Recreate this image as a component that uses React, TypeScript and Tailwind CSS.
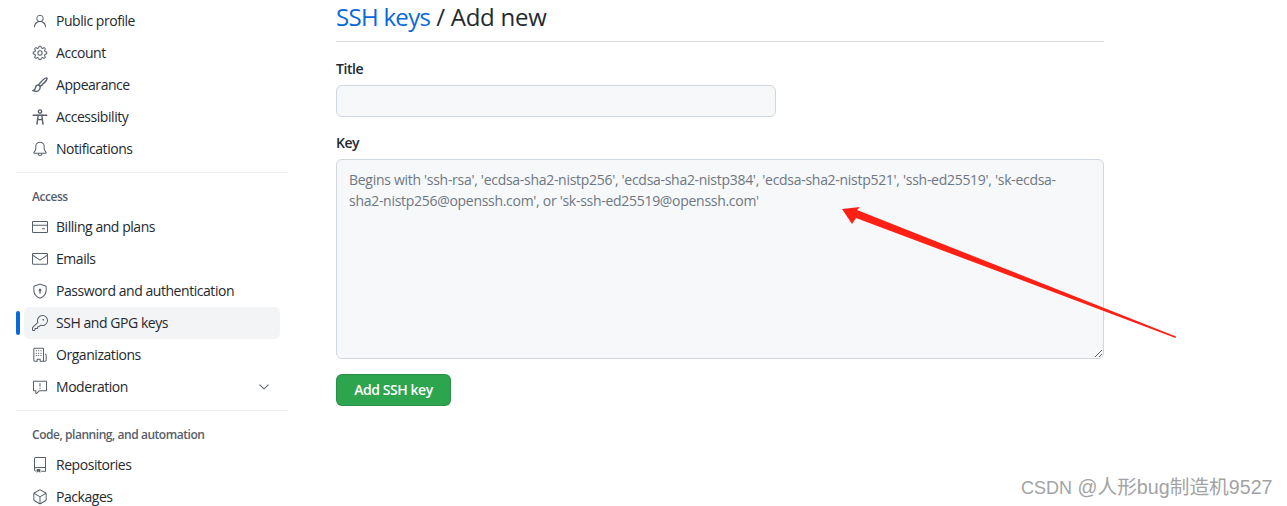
import {
  GoBell,
  GoChevronDown,
  GoCreditCard,
  GoGear,
  GoKey,
  GoMail,
  GoOrganization,
  GoPackage,
  GoPerson,
  GoReport,
  GoRepo,
  GoShieldLock,
} from "react-icons/go";
import type { ComponentType } from "react";

type IconProps = { className?: string };
type NavEntry = { label: string; icon: ComponentType<IconProps>; active?: boolean; chevron?: boolean };

function BrushIcon({ className }: IconProps) {
  return (
    <svg className={className} viewBox="0 0 16 16" fill="none" stroke="currentColor" strokeWidth="1.4">
      <path d="M14.9 1.1c-.9-.8-3.4 1-6.6 4.6L6.6 7.9l1.5 1.5 2.3-1.8c3.5-3.1 5.3-5.7 4.5-6.5Z" />
      <path d="M6.6 7.9c-1.7-.1-2.8.9-3 2.4-.2 1.5-.8 2.6-2.6 3.4 2.4 1 5.3.7 6.5-1.2.6-1 .8-1.9.6-3.1" />
    </svg>
  );
}

function FigureIcon({ className }: IconProps) {
  return (
    <svg className={className} viewBox="0 0 16 16" fill="none" stroke="currentColor" strokeWidth="1.4">
      <circle cx="8" cy="2.6" r="1.7" />
      <path d="M1.2 6.2h13.6" strokeLinecap="round" />
      <path d="M6.2 6.2 5 15.2M9.8 6.2l1.2 9M5.6 10.6h4.8" strokeLinecap="round" />
    </svg>
  );
}

const profileNav: NavEntry[] = [
  { label: "Public profile", icon: GoPerson },
  { label: "Account", icon: GoGear },
  { label: "Appearance", icon: BrushIcon },
  { label: "Accessibility", icon: FigureIcon },
  { label: "Notifications", icon: GoBell },
];

const accessNav: NavEntry[] = [
  { label: "Billing and plans", icon: GoCreditCard },
  { label: "Emails", icon: GoMail },
  { label: "Password and authentication", icon: GoShieldLock },
  { label: "SSH and GPG keys", icon: GoKey, active: true },
  { label: "Organizations", icon: GoOrganization },
  { label: "Moderation", icon: GoReport, chevron: true },
];

const codeNav: NavEntry[] = [
  { label: "Repositories", icon: GoRepo },
  { label: "Packages", icon: GoPackage },
];

function NavItem({ item }: { item: NavEntry }) {
  const Icon = item.icon;
  return (
    <div className="relative mx-2 flex h-8 items-center rounded-md">
      {item.active && (
        <>
          <div className="absolute inset-y-0 left-0 right-0 rounded-md bg-[#f3f4f6]" />
          <div className="absolute -left-2 top-1 h-6 w-1 rounded-md bg-[#0969da]" />
        </>
      )}
      <Icon className="relative ml-2 h-4 w-4 text-[#57606a]" />
      <span className="relative ml-2 text-sm text-[#24292f]">{item.label}</span>
      {item.chevron && <GoChevronDown className="relative ml-auto mr-2 h-4 w-4 text-[#57606a]" />}
    </div>
  );
}

function NavHeading({ children }: { children: string }) {
  return (
    <div className="flex h-[18px] items-center px-4 text-xs font-semibold text-[#57606a]">{children}</div>
  );
}

export default function App() {
  return (
    <div className="relative flex h-[506px] w-[1287px] overflow-hidden bg-white font-['Open_Sans',sans-serif] tracking-[-0.45px]">
      {/* Sidebar */}
      <aside className="ml-4 w-[272px] shrink-0 pt-[5px]">
        {profileNav.map((item) => (
          <NavItem key={item.label} item={item} />
        ))}
        <div className="mt-[7px] h-px bg-[#eaecef]" />
        <div className="mt-[15px]">
          <NavHeading>Access</NavHeading>
        </div>
        <div className="mt-[5px]">
          {accessNav.map((item) => (
            <NavItem key={item.label} item={item} />
          ))}
        </div>
        <div className="mt-[7px] h-px bg-[#eaecef]" />
        <div className="mt-[15px]">
          <NavHeading>Code, planning, and automation</NavHeading>
        </div>
        <div className="mt-[5px]">
          {codeNav.map((item) => (
            <NavItem key={item.label} item={item} />
          ))}
        </div>
      </aside>

      {/* Main form */}
      <main className="ml-12 w-[768px] shrink-0">
        <h2 className="h-[42px] border-b border-[#d8dee4] text-2xl leading-[33px] font-normal tracking-[-0.25px] text-[#24292f]">
          <span className="tracking-[-0.7px] text-[#0969da]">SSH keys</span> / Add new
        </h2>
        <label className="mt-[17px] block text-sm leading-[20px] font-semibold text-[#24292f]">Title</label>
        <input className="mt-[6px] block h-8 w-[440px] rounded-md border border-[#d0d7de] bg-[#f6f8fa]" />
        <label className="mt-4 block text-sm leading-[20px] font-semibold text-[#24292f]">Key</label>
        <textarea
          className="mt-[6px] block h-[200px] w-full rounded-md border border-[#d0d7de] bg-[#f6f8fa] pt-[9px] pr-4 pb-2 pl-3 text-sm leading-[21px] tracking-[-0.29px] placeholder:text-[#6e7781]"
          placeholder="Begins with 'ssh-rsa', 'ecdsa-sha2-nistp256', 'ecdsa-sha2-nistp384', 'ecdsa-sha2-nistp521', 'ssh-ed25519', 'sk-ecdsa-sha2-nistp256@openssh.com', or 'sk-ssh-ed25519@openssh.com'"
        />
        <button className="mt-[15px] h-8 w-[115px] rounded-md border border-[#1b1f2426] bg-[#2da44e] text-sm font-semibold text-white">
          Add SSH key
        </button>
      </main>

      {/* Red annotation arrow */}
      <svg className="absolute left-0 top-0 h-[506px] w-[1287px]" viewBox="0 0 1287 506">
        <polygon points="842,209 860,207 857,210 1176,336.5 1175.5,338 856,218 852,224" fill="#ff2015" />
      </svg>

      {/* Watermark */}
      <div className="absolute left-[1021px] top-[474px] font-['Liberation_Sans','Noto_Sans_CJK_SC',sans-serif] text-[19.7px] leading-[26px] tracking-normal whitespace-nowrap text-[#a3a3a3]">
        <span className="text-lg">CSDN</span> @人形bug制造机9527
      </div>
    </div>
  );
}
